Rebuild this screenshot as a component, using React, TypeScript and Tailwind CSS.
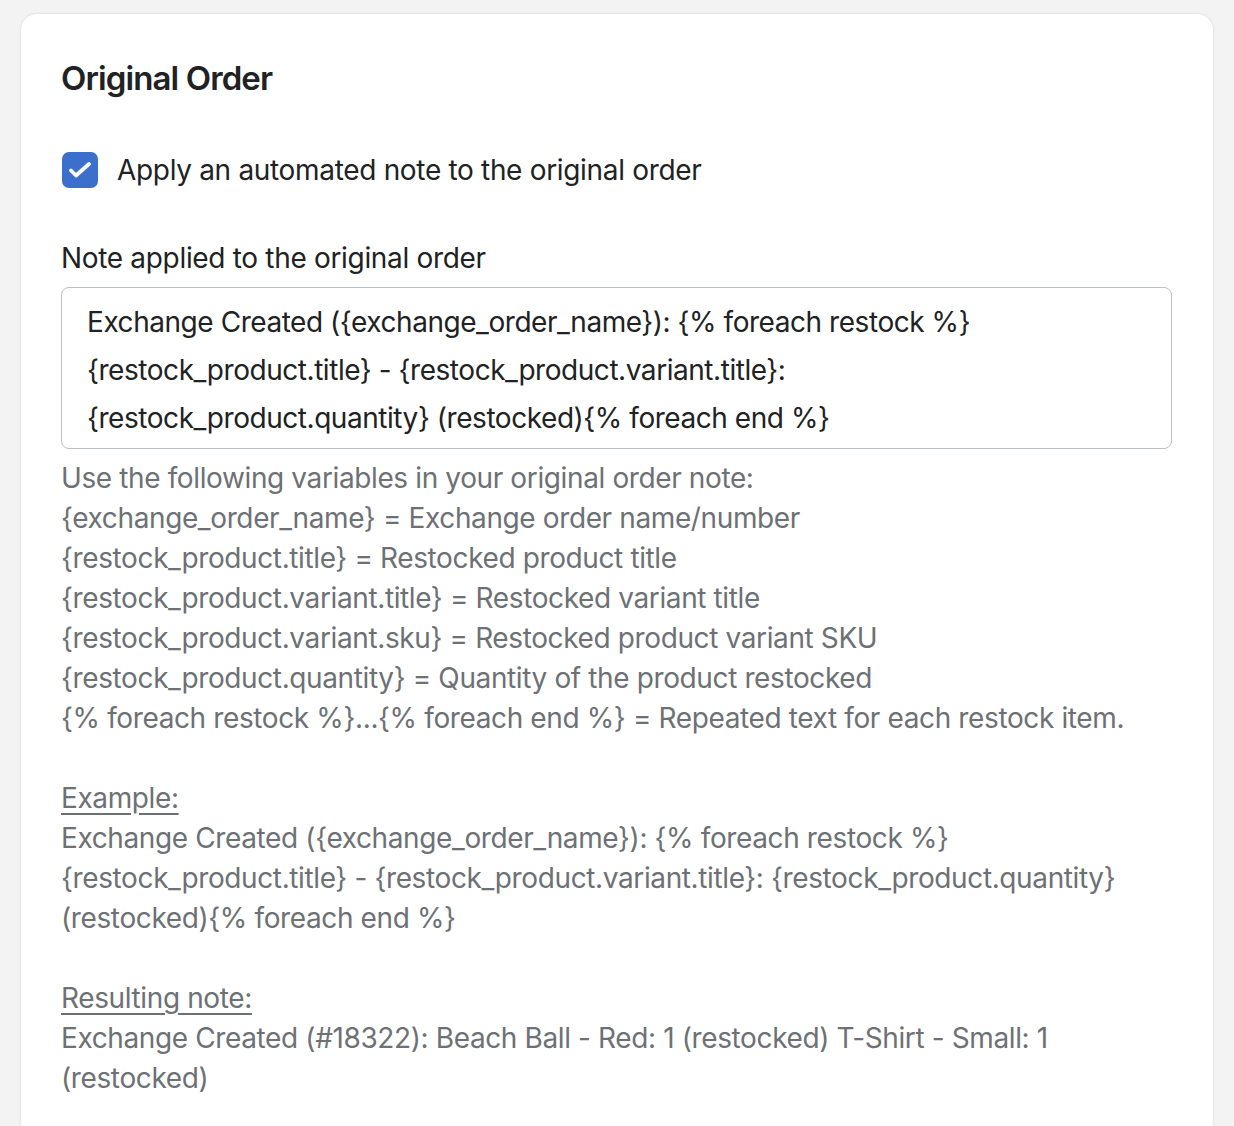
import { useState } from 'react';

const noteDefault =
  'Exchange Created ({exchange_order_name}): {% foreach restock %}\n{restock_product.title} - {restock_product.variant.title}:\n{restock_product.quantity} (restocked){% foreach end %}';

export default function App() {
  const [applyNote, setApplyNote] = useState(true);
  const [note, setNote] = useState(noteDefault);

  return (
    <div className="min-h-screen bg-[#f3f3f3] pl-[21px] pt-[14px] font-['Inter',sans-serif] text-[#202223]">
      <div className="w-[1192px] rounded-[16px] bg-white px-[40px] pt-[44px] pb-[40px] shadow-[0_0_3px_rgba(0,0,0,0.12)]">
        <h2 className="text-[33px] font-semibold leading-[40px] tracking-[-0.9px]">Original Order</h2>

        {/* Checkbox */}
        <label className="mt-[52px] flex h-[40px] cursor-pointer items-center gap-[19px]">
          <button
            type="button"
            onClick={() => setApplyNote(!applyNote)}
            className={`ml-[1px] flex h-[36px] w-[36px] items-center justify-center rounded-[7px] ${applyNote ? 'bg-[#3b6fcb]' : 'border-2 border-[#8c9196] bg-white'}`}
          >
            {applyNote && (
              <svg width="36" height="36" viewBox="0 0 36 36" fill="none">
                <path d="M9 18.5l5 5L27 12" stroke="white" strokeWidth="3.8" strokeLinecap="round" strokeLinejoin="round" />
              </svg>
            )}
          </button>
          <span className="text-[28px] leading-[40px] tracking-[-0.32px]">Apply an automated note to the original order</span>
        </label>

        {/* Note field */}
        <div className="mt-[48px] text-[28px] leading-[40px] tracking-[-0.32px]">Note applied to the original order</div>
        <textarea
          value={note}
          onChange={e => setNote(e.target.value)}
          rows={3}
          className="mt-[9px] block h-[162px] w-[1111px] resize-none rounded-[8px] border border-[#babfc3] px-[25px] pt-[10px] pb-[6px] text-[28px] leading-[48px] tracking-[-0.45px] text-[#202223] focus:outline-none"
        />

        {/* Help text */}
        <div className="mt-[9px] text-[28px] leading-[40px] tracking-[-0.38px] text-[#6d7175]">
          <p>Use the following variables in your original order note:</p>
          <p>{'{exchange_order_name}'} = Exchange order name/number</p>
          <p>{'{restock_product.title}'} = Restocked product title</p>
          <p>{'{restock_product.variant.title}'} = Restocked variant title</p>
          <p>{'{restock_product.variant.sku}'} = Restocked product variant SKU</p>
          <p>{'{restock_product.quantity}'} = Quantity of the product restocked</p>
          <p>{'{% foreach restock %}...{% foreach end %}'} = Repeated text for each restock item.</p>
          <p className="mt-[40px] underline underline-offset-[5px]">Example:</p>
          <p>
            Exchange Created ({'{exchange_order_name}'}): {'{% foreach restock %}'}
            <br />
            {'{restock_product.title}'} - {'{restock_product.variant.title}'}: {'{restock_product.quantity}'}
            <br />
            (restocked){'{% foreach end %}'}
          </p>
          <p className="mt-[40px] underline underline-offset-[5px]">Resulting note:</p>
          <p className="w-[1030px]">Exchange Created (#18322): Beach Ball - Red: 1 (restocked) T-Shirt - Small: 1 (restocked)</p>
        </div>
      </div>
    </div>
  );
}
